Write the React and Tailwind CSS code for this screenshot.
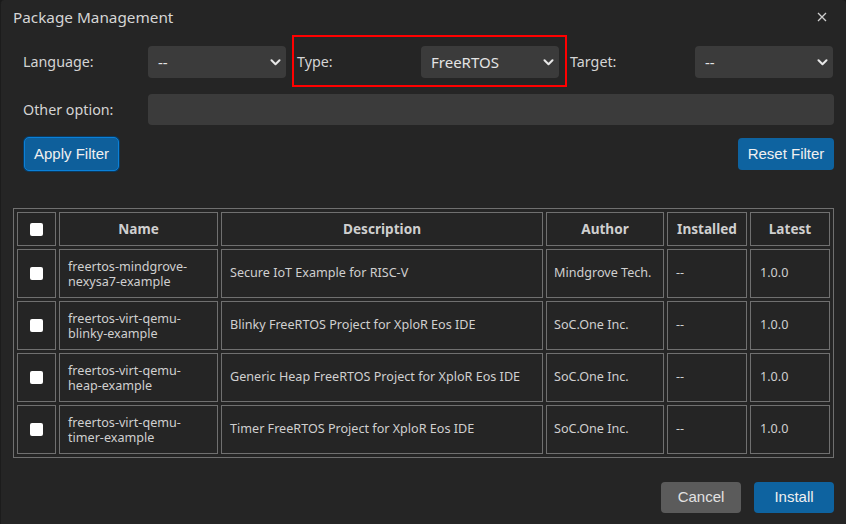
import React from "react";

const rows = [
  { name: ["freertos-mindgrove-", "nexysa7-example"], desc: "Secure IoT Example for RISC-V", author: "Mindgrove Tech." },
  { name: ["freertos-virt-qemu-", "blinky-example"], desc: "Blinky FreeRTOS Project for XploR Eos IDE", author: "SoC.One Inc." },
  { name: ["freertos-virt-qemu-", "heap-example"], desc: "Generic Heap FreeRTOS Project for XploR Eos IDE", author: "SoC.One Inc." },
  { name: ["freertos-virt-qemu-", "timer-example"], desc: "Timer FreeRTOS Project for XploR Eos IDE", author: "SoC.One Inc." },
];

function Chevron() {
  return (
    <svg width="11" height="7" viewBox="0 0 11 7" className="shrink-0">
      <path d="M1.5 1.3 L5.5 5.3 L9.5 1.3" fill="none" stroke="#e8e8e8" strokeWidth="2" strokeLinecap="round" strokeLinejoin="round" />
    </svg>
  );
}

function Select({ value }) {
  return (
    <div className="w-[138px] h-[32px] rounded-[4px] bg-[#3b3b3b] flex items-center justify-between pl-[10px] pr-[5px] text-[15px] text-[#e4e4e4]">
      <span>{value}</span>
      <Chevron />
    </div>
  );
}

function Box() {
  return <div className="w-[13px] h-[13px] bg-white rounded-[2px] mx-auto" />;
}

export default function App() {
  const font = { fontFamily: '"Noto Sans", "Open Sans", sans-serif' };
  const btnFont = { fontFamily: '"Liberation Sans", Arial, sans-serif' };
  return (
    <div className="w-[846px] h-[524px] bg-[#1a1a1a] overflow-hidden" style={font}>
      <div className="w-[846px] h-[524px] bg-[#252525] rounded-t-[4px] border-l border-[#1c1c1c] flex flex-col text-[#d0d0d0]">
        <div className="h-[34px] flex items-center justify-between pl-[12px] pr-[19px]">
          <span className="text-[15.3px] text-[#d6d6d6]">Package Management</span>
          <svg width="10" height="10" viewBox="0 0 10 10">
            <path d="M1 1 L9 9 M9 1 L1 9" stroke="#cfcfcf" strokeWidth="1.3" />
          </svg>
        </div>

        <div className="pl-[22px] pr-[12px]">
          <div className="mt-[12px] flex items-center gap-[11px] h-[32px]">
            <div className="flex items-center">
              <span className="w-[125px] text-[14.3px] text-[#d4d4d4]">Language:</span>
              <Select value="--" />
            </div>
            <div className="relative flex items-center">
              <span className="w-[124px] text-[14.3px] text-[#d4d4d4]">Type:</span>
              <Select value="FreeRTOS" />
              <div className="absolute left-[-5px] right-[-8px] top-[-11px] bottom-[-9px] border-2 border-[#ff0000] pointer-events-none" />
            </div>
            <div className="flex items-center">
              <span className="w-[125px] text-[14.3px] text-[#d4d4d4]">Target:</span>
              <Select value="--" />
            </div>
          </div>

          <div className="mt-[16px] flex items-center h-[31px]">
            <span className="w-[125px] text-[14.3px] text-[#d4d4d4]">Other option:</span>
            <div className="flex-1 h-[31px] rounded-[4px] bg-[#3b3b3b]" />
          </div>

          <div className="mt-[12px] flex items-center justify-between" style={btnFont}>
            <button className="ml-[1px] h-[34px] px-[9px] rounded-[5px] bg-[#0e5f9b] border border-[#0a80d8] ring-1 ring-[#0a3a60] text-[15px] text-[#f0f0f0]">Apply Filter</button>
            <button className="h-[32px] w-[96px] rounded-[4px] bg-[#0e63a0] text-[15px] text-[#f0f0f0]">Reset Filter</button>
          </div>
        </div>

        <div className="mt-[37px] pl-[12px] pr-[12px]">
          <table className="w-[821px] table-fixed border-separate border-spacing-[3px] border border-[#707070] text-[12.6px] text-[#d0d0d0]">
            <colgroup>
              <col className="w-[39px]" />
              <col className="w-[159px]" />
              <col className="w-[322px]" />
              <col className="w-[118px]" />
              <col className="w-[80px]" />
              <col className="w-[80px]" />
            </colgroup>
            <thead>
              <tr className="h-[34px]">
                <th className="border border-[#707070]"><Box /></th>
                <th className="border border-[#707070] font-bold text-[13.6px] text-[#cfcfcf]">Name</th>
                <th className="border border-[#707070] font-bold text-[13.6px] text-[#cfcfcf]">Description</th>
                <th className="border border-[#707070] font-bold text-[13.6px] text-[#cfcfcf]">Author</th>
                <th className="border border-[#707070] font-bold text-[13.6px] text-[#cfcfcf]">Installed</th>
                <th className="border border-[#707070] font-bold text-[13.6px] text-[#cfcfcf]">Latest</th>
              </tr>
            </thead>
            <tbody>
              {rows.map((r, i) => (
                <tr key={i} className="h-[49px]">
                  <td className="border border-[#707070]"><Box /></td>
                  <td className="border border-[#707070] px-[8px] leading-[15px]">{r.name[0]}<br />{r.name[1]}</td>
                  <td className="border border-[#707070] px-[8px]">{r.desc}</td>
                  <td className="border border-[#707070] px-[7px]">{r.author}</td>
                  <td className="border border-[#707070] px-[8px]">--</td>
                  <td className="border border-[#707070] px-[9px]">1.0.0</td>
                </tr>
              ))}
            </tbody>
          </table>
        </div>

        <div className="mt-[24px] pr-[12px] flex justify-end gap-[13px]" style={btnFont}>
          <button className="w-[80px] h-[31px] rounded-[4px] bg-[#5b5b5b] text-[15px] text-[#e2e2e2]">Cancel</button>
          <button className="w-[80px] h-[31px] rounded-[4px] bg-[#0e63a0] text-[15px] text-[#f0f0f0]">Install</button>
        </div>
      </div>
    </div>
  );
}
